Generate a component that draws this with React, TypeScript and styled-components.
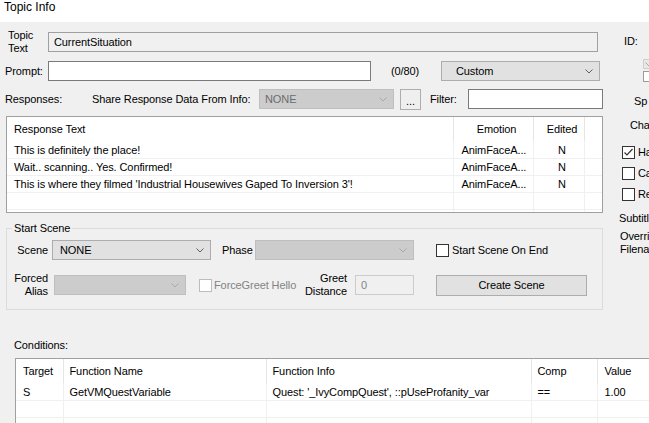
import styled, { createGlobalStyle } from "styled-components"

const GlobalStyle = createGlobalStyle`
  html, body {
    margin: 0;
    padding: 0;
    background: #f0f0f0;
  }
  body {
    font-family: "Liberation Sans", Arial, sans-serif;
    font-size: 11px;
    letter-spacing: -0.1px;
    color: #000;
    overflow: hidden;
  }
  * {
    box-sizing: border-box;
  }
`

const responses = [
  { text: "This is definitely the place!", emotion: "AnimFaceA...", edited: "N" },
  { text: "Wait.. scanning.. Yes. Confirmed!", emotion: "AnimFaceA...", edited: "N" },
  { text: "This is where they filmed 'Industrial Housewives Gaped To Inversion 3'!", emotion: "AnimFaceA...", edited: "N" },
  null,
  null,
]

const conditions = [
  { target: "S", fn: "GetVMQuestVariable", info: "Quest: '_IvyCompQuest', ::pUseProfanity_var", comp: "==", value: "1.00" },
  null,
  null,
]

function Chevron({ off }: { off?: boolean }) {
  return (
    <svg width="8" height="5" viewBox="0 0 8 5" aria-hidden>
      <path d="M0.5 0.5 L4 4 L7.5 0.5" fill="none" stroke={off ? "#a8a8a8" : "#606060"} strokeWidth="1" />
    </svg>
  )
}

function Check({ checked, off }: { checked?: boolean; off?: boolean }) {
  return (
    <Box $off={off}>
      {checked && (
        <svg width="11" height="11" viewBox="0 0 11 11" aria-hidden>
          <path d="M1.5 5.5 L4 8 L9.5 2" fill="none" stroke="#333" strokeWidth="1.2" />
        </svg>
      )}
    </Box>
  )
}

export default function App() {
  return (
    <Window>
      <GlobalStyle />
      <TitleBar>Topic Info</TitleBar>
      <Top>
        <Main>
          <TopicRow>
            <TwoLine $w={40}>Topic<br />Text</TwoLine>
            <Field $w={550} $tone="read">CurrentSituation</Field>
          </TopicRow>

          <Row $top={6} $left={5}>
            <Text $w={43}>Prompt:</Text>
            <Field $w={323} />
            <Text $w={50} $ml={20}>(0/80)</Text>
            <Combo $w={159} $pad={14}>
              <span>Custom</span>
              <Chevron />
            </Combo>
          </Row>

          <Row $top={8} $left={5}>
            <Text $w={87}>Responses:</Text>
            <Text $w={167}>Share Response Data From Info:</Text>
            <Combo $w={135} $off>
              <span>NONE</span>
              <Chevron off />
            </Combo>
            <DotsButton>...</DotsButton>
            <Text $w={38} $ml={9}>Filter:</Text>
            <Field $w={135} />
          </Row>

          <List>
            <Grid>
              <colgroup>
                <col style={{ width: 446 }} />
                <col style={{ width: 80 }} />
                <col style={{ width: 51 }} />
                <col />
              </colgroup>
              <thead>
                <tr>
                  <Th>Response Text</Th>
                  <Th $center>Emotion</Th>
                  <Th $center>Edited</Th>
                  <Th />
                </tr>
              </thead>
              <tbody>
                {responses.map((r, i) => (
                  <Tr key={i}>
                    <Td>{r?.text}</Td>
                    <Td $pl={8}>{r?.emotion}</Td>
                    <Td $center>{r?.edited}</Td>
                    <Td />
                  </Tr>
                ))}
              </tbody>
            </Grid>
          </List>

          <Group>
            <GroupTitle>Start Scene</GroupTitle>
            <GroupRow>
              <Text $w={41} $right>Scene</Text>
              <Combo $w={159} $ml={4} $pad={7}>
                <span>NONE</span>
                <Chevron />
              </Combo>
              <Text $w={33} $ml={11}>Phase</Text>
              <Combo $w={159} $off>
                <span />
                <Chevron off />
              </Combo>
              <CheckLine $ml={22}>
                <Check />
                <span>Start Scene On End</span>
              </CheckLine>
            </GroupRow>
            <GroupRow $top={14} $h={22}>
              <TwoLine $w={41} $right>Forced<br />Alias</TwoLine>
              <Combo $w={132} $ml={6} $off>
                <span />
                <Chevron off />
              </Combo>
              <CheckLine $ml={13} $w={101} $gap={2} $off>
                <Check off />
                <span>ForceGreet Hello</span>
              </CheckLine>
              <TwoLine $w={47} $right>Greet<br />Distance</TwoLine>
              <Field $w={59} $ml={8} $tone="off">0</Field>
              <Button $w={151} $ml={22}>Create Scene</Button>
            </GroupRow>
          </Group>
        </Main>

        <Side>
          <SideText $top={13} $left={12}>ID:</SideText>
          <MiniCombo>
            <Chevron off />
          </MiniCombo>
          <MiniBox />
          <SideText $top={13} $left={22}>Sp</SideText>
          <SideText $top={11} $left={18}>Cha</SideText>
          <SideChecks>
            <CheckLine>
              <Check checked />
              <span>Ha</span>
            </CheckLine>
            <CheckLine>
              <Check />
              <span>Ca</span>
            </CheckLine>
            <CheckLine>
              <Check />
              <span>Re</span>
            </CheckLine>
          </SideChecks>
          <SideText $top={11} $left={7}>Subtitl</SideText>
          <SideText $top={5} $left={8}>Overri<br />Filena</SideText>
        </Side>
      </Top>

      <Conditions>
        <SectionLabel>Conditions:</SectionLabel>
        <CondBox>
          <Grid>
            <colgroup>
              <col style={{ width: 47 }} />
              <col style={{ width: 203 }} />
              <col style={{ width: 265 }} />
              <col style={{ width: 66 }} />
              <col />
            </colgroup>
            <thead>
              <tr>
                <Th>Target</Th>
                <Th $pl={6}>Function Name</Th>
                <Th $pl={6}>Function Info</Th>
                <Th $pl={6}>Comp</Th>
                <Th $pl={7}>Value</Th>
              </tr>
            </thead>
            <tbody>
              {conditions.map((c, i) => (
                <Tr key={i}>
                  <Td>{c?.target}</Td>
                  <Td $pl={6}>{c?.fn}</Td>
                  <Td $pl={6}>{c?.info}</Td>
                  <Td $pl={6}>{c?.comp}</Td>
                  <Td $pl={7}>{c?.value}</Td>
                </Tr>
              ))}
            </tbody>
          </Grid>
        </CondBox>
      </Conditions>
    </Window>
  )
}

const Window = styled.div`
  width: 649px;
  height: 423px;
  overflow: hidden;
  background: #f0f0f0;
`

const TitleBar = styled.div`
  height: 22px;
  background: #fff;
  padding-left: 4px;
  font-size: 12px;
  letter-spacing: 0;
  line-height: 14px;
`

const Top = styled.div`
  display: flex;
`

const Main = styled.div`
  width: 612px;
  flex: none;
  display: flex;
  flex-direction: column;
`

const TopicRow = styled.div`
  display: flex;
  align-items: center;
  height: 26px;
  margin-top: 7px;
  padding-left: 8px;
`

const Row = styled.div<{ $top: number; $left: number }>`
  display: flex;
  align-items: center;
  height: 20px;
  margin-top: ${p => p.$top}px;
  padding-left: ${p => p.$left}px;
`

const Text = styled.span<{ $w: number; $ml?: number; $right?: boolean }>`
  flex: none;
  width: ${p => p.$w}px;
  margin-left: ${p => p.$ml ?? 0}px;
  text-align: ${p => (p.$right ? "right" : "left")};
  white-space: nowrap;
  line-height: 13px;
`

const TwoLine = styled(Text)`
  line-height: 13px;
`

const Field = styled.div<{ $w: number; $ml?: number; $tone?: "edit" | "read" | "off" }>`
  flex: none;
  width: ${p => p.$w}px;
  height: 20px;
  margin-left: ${p => p.$ml ?? 0}px;
  display: flex;
  align-items: center;
  padding-left: 5px;
  background: ${p => (p.$tone === "read" || p.$tone === "off" ? "#f0f0f0" : "#fff")};
  border: 1px solid ${p => (p.$tone === "off" ? "#cccccc" : p.$tone === "read" ? "#a0a0a0" : "#7a7a7a")};
  color: ${p => (p.$tone === "off" ? "#838383" : "#000")};
`

const Combo = styled.div<{ $w: number; $ml?: number; $off?: boolean; $pad?: number }>`
  flex: none;
  width: ${p => p.$w}px;
  height: 20px;
  margin-left: ${p => p.$ml ?? 0}px;
  display: flex;
  align-items: center;
  justify-content: space-between;
  padding: 0 6px 0 ${p => p.$pad ?? 5}px;
  background: ${p => (p.$off ? "#cccccc" : "#e1e1e1")};
  border: 1px solid ${p => (p.$off ? "#bfbfbf" : "#adadad")};
  color: ${p => (p.$off ? "#6d6d6d" : "#000")};
`

const DotsButton = styled.div`
  flex: none;
  width: 21px;
  height: 21px;
  margin-left: 6px;
  display: flex;
  align-items: flex-end;
  justify-content: center;
  padding-bottom: 3px;
  background: #efefef;
  border: 1px solid #adadad;
  line-height: 10px;
`

const Button = styled.div<{ $w: number; $ml?: number }>`
  flex: none;
  width: ${p => p.$w}px;
  height: 21px;
  margin-left: ${p => p.$ml ?? 0}px;
  display: flex;
  align-items: center;
  justify-content: center;
  background: #e1e1e1;
  border: 1px solid #adadad;
`

const List = styled.div`
  width: 597px;
  height: 97px;
  margin: 7px 0 0 6px;
  background: #fff;
  border: 1px solid #a0a0a0;
  overflow: hidden;
`

const Grid = styled.table`
  width: 100%;
  table-layout: fixed;
  border-collapse: collapse;
`

const Th = styled.th<{ $center?: boolean; $pl?: number }>`
  height: 24px;
  padding: 0 0 0 ${p => p.$pl ?? 7}px;
  font-weight: normal;
  text-align: ${p => (p.$center ? "center" : "left")};
  white-space: nowrap;
  overflow: hidden;
  border-right: 1px solid #e5e5e5;
  &:last-child {
    border-right: none;
  }
`

const Tr = styled.tr`
  height: 17px;
`

const Td = styled.td<{ $center?: boolean; $pl?: number }>`
  height: 17px;
  padding: 1px 0 0 ${p => p.$pl ?? 7}px;
  text-align: ${p => (p.$center ? "center" : "left")};
  white-space: nowrap;
  overflow: hidden;
  border-bottom: 1px solid #f0f0f0;
  border-right: 1px solid #f0f0f0;
  &:last-child {
    border-right: none;
  }
`

const Group = styled.fieldset`
  width: 597px;
  margin: 8px 0 0 6px;
  padding: 5px 0 13px 0;
  border: 1px solid #dcdcdc;
  min-width: 0;
`

const GroupTitle = styled.legend`
  margin-left: 5px;
  padding: 0 2px;
  line-height: 14px;
`

const GroupRow = styled.div<{ $top?: number; $h?: number }>`
  display: flex;
  align-items: center;
  height: ${p => p.$h ?? 20}px;
  margin-top: ${p => p.$top ?? 0}px;
`

const CheckLine = styled.label<{ $ml?: number; $w?: number; $gap?: number; $off?: boolean }>`
  flex: none;
  display: flex;
  align-items: center;
  gap: ${p => p.$gap ?? 3}px;
  width: ${p => (p.$w ? `${p.$w}px` : "auto")};
  margin-left: ${p => p.$ml ?? 0}px;
  color: ${p => (p.$off ? "#838383" : "#000")};
  white-space: nowrap;
  line-height: 13px;
`

const Box = styled.span<{ $off?: boolean }>`
  flex: none;
  width: 13px;
  height: 13px;
  display: flex;
  align-items: center;
  justify-content: center;
  background: #fff;
  border: 1px solid ${p => (p.$off ? "#bcbcbc" : "#333")};
`

const Side = styled.div`
  flex: 1;
  min-width: 0;
  display: flex;
  flex-direction: column;
  overflow: hidden;
`

const SideText = styled.div<{ $top: number; $left: number }>`
  margin: ${p => p.$top}px 0 0 ${p => p.$left}px;
  line-height: 13px;
  white-space: nowrap;
`

const MiniCombo = styled.div`
  width: 20px;
  height: 10px;
  margin: 11px 0 0 31px;
  display: flex;
  align-items: center;
  padding-left: 1px;
  background: #e8e8e8;
  border: 1px solid #cfcfcf;
`

const MiniBox = styled.div`
  width: 20px;
  height: 11px;
  margin: 2px 0 0 31px;
  background: #fff;
  border: 1px solid #9a9a9a;
`

const SideChecks = styled.div`
  display: flex;
  flex-direction: column;
  gap: 8px;
  margin: 14px 0 0 10px;
`

const Conditions = styled.section`
  display: flex;
  flex-direction: column;
`

const SectionLabel = styled.div`
  margin: 29px 0 0 14px;
  line-height: 13px;
`

const CondBox = styled.div`
  width: 720px;
  height: 80px;
  margin: 6px 0 0 15px;
  background: #fff;
  border-top: 1px solid #a0a0a0;
  border-left: 1px solid #a0a0a0;
  overflow: hidden;
`
